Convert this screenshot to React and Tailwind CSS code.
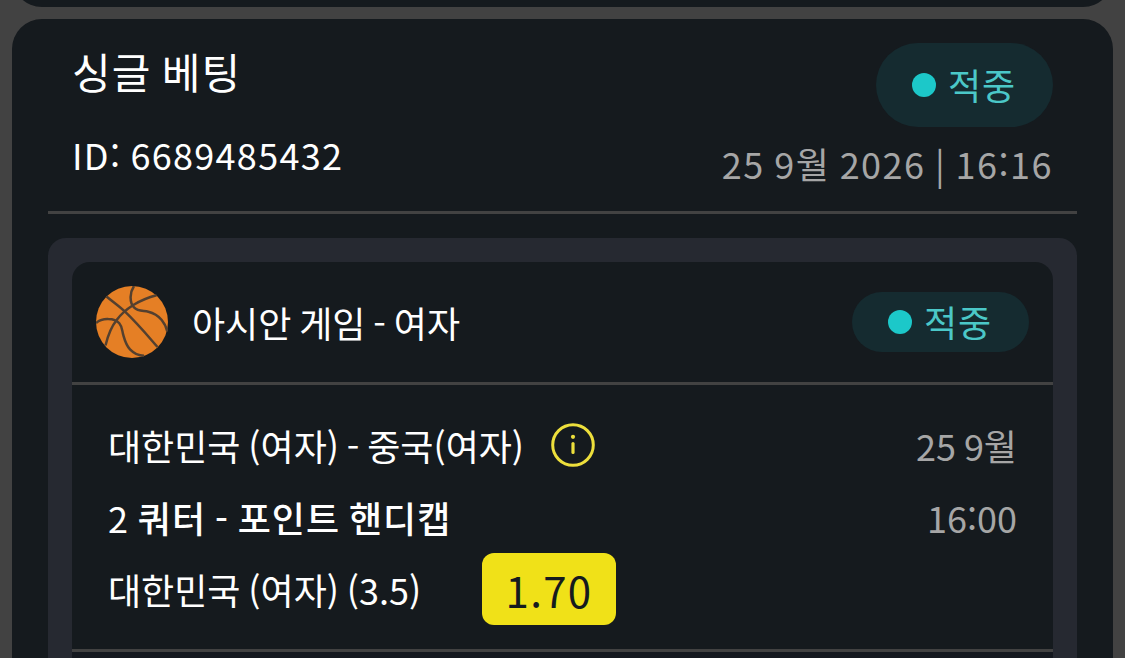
import clsx from 'clsx';

const bet = {
  type: '싱글 베팅',
  id: '6689485432',
  placedAt: '25 9월 2026 | 16:16',
  status: '적중',
  league: '아시안 게임 - 여자',
  match: '대한민국 (여자) - 중국(여자)',
  period: '2',
  market: ' 쿼터 - 포인트 핸디캡',
  pick: '대한민국 (여자) (3.5)',
  odds: '1.70',
  date: '25 9월',
  time: '16:00',
};

function StatusBadge({ label, className }) {
  return (
    <div className={clsx('flex w-[177px] shrink-0 items-center rounded-full bg-[#152b30] pl-9 text-[#4bc8c8]', className)}>
      <span className="size-6 rounded-full bg-[#1cc8c9]" />
      <span className="-mt-0.5 ml-3 tracking-[1px]">{label}</span>
    </div>
  );
}

function BasketballIcon() {
  return (
    <svg className="size-[72px] shrink-0" viewBox="0 0 72 72" fill="none">
      <circle cx="36" cy="36" r="36" fill="#e57f25" />
      <g stroke="#54402f" strokeWidth="2.5">
        <path d="M10.500 10.500C17 16 23 20 29 25.700C41 37 51 49 61.500 61" />
        <path d="M9.500 59.500C12 49 15 41 20.700 34C25 28 31 23 37.300 19C44 15 52 11.500 60.500 9.300" />
        <path d="M38 0C34 6 33 16 38 21.300C42 25.500 47 24.500 52.300 25.700C58 27 62 29.500 65.700 34C68.500 37.500 70.500 41 71.300 45.500" />
        <path d="M0 37C4 33.500 8 32.800 12.300 33C17 33 20.500 34 23.300 37.300C26.500 41 26 45 27.300 49C29 55 30 59 34 63.300C38 67.500 42 69.500 48 69.800" />
      </g>
    </svg>
  );
}

function InfoIcon() {
  return (
    <svg className="size-11" viewBox="0 0 44 44" fill="none">
      <circle cx="22" cy="22" r="20.300" stroke="#eddf3c" strokeWidth="3" />
      <circle cx="22" cy="13.800" r="2.100" fill="#eddf3c" />
      <path d="M22 20.500V29.500" stroke="#eddf3c" strokeWidth="3.200" strokeLinecap="round" />
    </svg>
  );
}

export default function App() {
  return (
    <div lang="ko" className="flex h-[658px] flex-col gap-3 overflow-hidden bg-[#424242] px-3 font-['Noto_Sans_CJK_KR',sans-serif] text-4xl/[72px] [word-spacing:-2.2px] whitespace-pre text-white">
      {/* bottom edge of the previous bet */}
      <div className="flex h-[7px] shrink-0 items-end overflow-hidden">
        <div className="h-16 w-full shrink-0 rounded-b-[30px] bg-[#151a1e]" />
      </div>

      <section className="h-[700px] shrink-0 rounded-t-[30px] bg-[#151a1e] px-9 pt-6">
        <header className="flex h-[171px] justify-between border-b-3 border-[#424242] px-6">
          <div>
            <h1 className="text-[42px]/[56px] tracking-[1px]">{bet.type}</h1>
            <p className="mt-[19px] tracking-[1.3px]">ID: {bet.id}</p>
          </div>
          <div className="flex flex-col items-end">
            <StatusBadge label={bet.status} className="h-[84px]" />
            <p className="text-[#a6a6a6] tracking-[1.5px]">{bet.placedAt}</p>
          </div>
        </header>

        <div className="mt-6 h-[460px] rounded-t-[18px] bg-[#262931] px-6 pt-6">
          <article className="rounded-t-[18px] bg-[#151a1e]">
            <div className="flex h-[123px] items-center gap-6 border-b-3 border-[#424242] px-6">
              <BasketballIcon />
              <span className="grow">{bet.league}</span>
              <StatusBadge label={bet.status} className="h-[60px]" />
            </div>

            <div className="flex justify-between border-b-3 border-[#424242] px-9 py-6">
              <div>
                <div className="flex items-center gap-[27px]">
                  <span>{bet.match}</span>
                  <InfoIcon />
                </div>
                <p className="font-medium tracking-[1px]">
                  <span className="font-normal">{bet.period}</span>
                  {bet.market}
                </p>
                <div className="flex items-center">
                  <span className="w-[374px]">{bet.pick}</span>
                  <span className="h-[72px] w-[134px] rounded-xl bg-[#f0e118] text-center text-[42px]/[74px] tracking-[1.3px] text-[#151a1e]">{bet.odds}</span>
                </div>
              </div>
              <div className="text-right text-[#a6a6a6]">
                <p>{bet.date}</p>
                <p>{bet.time}</p>
              </div>
            </div>
            <div className="h-12 bg-[#14181f]" />
          </article>
        </div>
      </section>
    </div>
  );
}
